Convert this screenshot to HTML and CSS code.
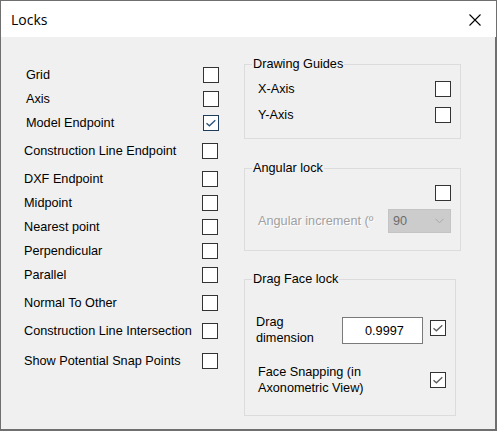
FILE: index.html
```html
<!DOCTYPE html>
<html lang="en">
<head>
<meta charset="utf-8">
<title>Locks</title>
<link rel="stylesheet" href="styles.css">
</head>
<body>
<div class="window">
  <header class="titlebar">
    <span class="title">Locks</span>
    <span class="close" aria-label="Close">
      <svg width="12" height="12" viewBox="0 0 12 12"><path d="M0.5 0.5L11.5 11.5M11.5 0.5L0.5 11.5" stroke="#000" stroke-width="1.1" fill="none"/></svg>
    </span>
  </header>

  <div class="content">
    <div class="snaps">
      <div class="row inset"><span class="lbl">Grid</span><span class="cb"></span></div>
      <div class="row inset"><span class="lbl">Axis</span><span class="cb"></span></div>
      <div class="row inset"><span class="lbl">Model Endpoint</span><span class="cb on blue"><svg viewBox="0 0 16 16"><path d="M3.5 8.2L6.4 10.8L12.3 5.2" /></svg></span></div>
      <div class="row wide"><span class="lbl">Construction Line Endpoint</span><span class="cb"></span></div>
      <div class="row wide"><span class="lbl">DXF Endpoint</span><span class="cb"></span></div>
      <div class="row"><span class="lbl">Midpoint</span><span class="cb"></span></div>
      <div class="row"><span class="lbl">Nearest point</span><span class="cb"></span></div>
      <div class="row"><span class="lbl">Perpendicular</span><span class="cb"></span></div>
      <div class="row"><span class="lbl">Parallel</span><span class="cb"></span></div>
      <div class="row wide"><span class="lbl">Normal To Other</span><span class="cb"></span></div>
      <div class="row wide"><span class="lbl">Construction Line Intersection</span><span class="cb"></span></div>
      <div class="row wider"><span class="lbl">Show Potential Snap Points</span><span class="cb"></span></div>
    </div>

    <div class="groups">
      <fieldset class="group guides">
        <legend>Drawing Guides</legend>
        <div class="gbody">
          <div class="grow"><span class="lbl">X-Axis</span><span class="cb"></span></div>
          <div class="grow"><span class="lbl">Y-Axis</span><span class="cb"></span></div>
        </div>
      </fieldset>

      <fieldset class="group angular">
        <legend>Angular lock</legend>
        <div class="gbody">
          <div class="grow end"><span class="cb"></span></div>
          <div class="grow">
            <span class="lbl disabled">Angular increment (º</span>
            <span class="combo"><span>90</span><svg width="9" height="6" viewBox="0 0 9 6"><path d="M0.5 0.8L4.5 4.8L8.5 0.8" stroke="#a8a8a8" stroke-width="1" fill="none"/></svg></span>
          </div>
        </div>
      </fieldset>

      <fieldset class="group drag">
        <legend>Drag Face lock</legend>
        <div class="gbody">
          <div class="grow dim">
            <span class="lbl dimlbl">Drag dimension</span>
            <span class="field">0.9997</span>
            <span class="cb on gray lift"><svg viewBox="0 0 16 16"><path d="M3.5 8.2L6.4 10.8L12.3 5.2" /></svg></span>
          </div>
          <div class="grow snap">
            <span class="lbl snaplbl">Face Snapping (in Axonometric View)</span>
            <span class="cb on gray"><svg viewBox="0 0 16 16"><path d="M3.5 8.2L6.4 10.8L12.3 5.2" /></svg></span>
          </div>
        </div>
      </fieldset>
    </div>
  </div>
</div>
</body>
</html>
```

FILE: styles.css
```css
* {
  box-sizing: border-box;
}

html,
body {
  margin: 0;
  background: #ffffff;
}

body {
  font-family: "Liberation Sans", Arial, sans-serif;
  font-size: 12.7px;
  color: #000000;
}

/* dialog frame */
.window {
  width: 497px;
  height: 431px;
  border: 1px solid #6f6f6f;
  display: flex;
  flex-direction: column;
  background: #f0f0f0;
}

.titlebar {
  height: 36px;
  flex: none;
  background: #ffffff;
  display: flex;
  align-items: center;
  justify-content: space-between;
  padding: 0 15px 0 10px;
}

.title {
  font-family: "Open Sans", "Noto Sans", sans-serif;
  font-size: 14px;
  color: #000000;
  line-height: 18px;
  margin-top: 1px;
}

.close {
  display: flex;
  width: 12px;
  height: 12px;
  margin-top: 1px;
}

.content {
  flex: 1;
  display: flex;
  align-items: flex-start;
  border-right: 1px solid #6f6f6f;
  border-bottom: 1px solid #6f6f6f;
}

/* left column: snap options */
.snaps {
  width: 219px;
  padding: 30px 1px 0 23px;
  display: flex;
  flex-direction: column;
  gap: 8px;
}

.row {
  height: 16px;
  display: flex;
  align-items: center;
  justify-content: space-between;
  padding-right: 1px;
}

.row.inset {
  padding-left: 2px;
  padding-right: 0;
}

.row.wide {
  margin-top: 4px;
}

.row.wider {
  margin-top: 6px;
}

.lbl {
  line-height: 16px;
  white-space: nowrap;
}

/* checkbox */
.cb {
  flex: none;
  width: 16px;
  height: 16px;
  border: 1px solid #333333;
  background: #ffffff;
  display: block;
  position: relative;
}

.cb svg {
  position: absolute;
  left: -1px;
  top: -1px;
  width: 16px;
  height: 16px;
  fill: none;
  stroke-width: 1.3;
}

.cb.blue {
  border-color: #1e3d5c;
}

.cb.blue svg {
  stroke: #2a5279;
}

.cb.gray svg {
  stroke: #5c5c5c;
}

/* right column: group boxes */
.groups {
  margin-left: 24px;
  padding-top: 20px;
  display: flex;
  flex-direction: column;
}

.group {
  margin: 0;
  padding: 0;
  width: 217px;
  border: 1px solid #dcdcdc;
  min-width: 0;
}

.group legend {
  margin-left: 7px;
  padding: 0 1px;
  line-height: 15px;
}

.group.angular {
  margin-top: 22px;
}

.group.drag {
  margin-top: 21px;
  width: 212px;
}

.gbody {
  padding: 9px 9px 15px 13px;
  display: flex;
  flex-direction: column;
  gap: 10px;
}

.grow {
  display: flex;
  align-items: center;
  justify-content: space-between;
  min-height: 16px;
}

.grow.end {
  justify-content: flex-end;
}

.angular .gbody {
  gap: 8px;
  padding-bottom: 17px;
}

.disabled {
  color: #a0a0a0;
  text-shadow: 1px 1px 0 #ffffff;
}

.combo {
  width: 63px;
  height: 24px;
  border: 1px solid #c4c4c4;
  background: #cccccc;
  color: #6d6d6d;
  display: flex;
  align-items: center;
  justify-content: space-between;
  padding: 0 6px 0 4px;
}

.combo svg {
  display: block;
}

/* drag face rows */
.drag .gbody {
  padding-top: 28px;
  padding-left: 11px;
  padding-bottom: 19px;
  gap: 18px;
}

.grow.dim {
  justify-content: flex-start;
}

.dimlbl {
  white-space: normal;
  width: 86px;
  line-height: 15.5px;
}

.field {
  width: 81px;
  height: 27px;
  border: 1px solid #7a7a7a;
  background: #ffffff;
  display: flex;
  align-items: center;
  padding-left: 22px;
  margin-right: 7px;
}

.lift {
  margin-bottom: 5px;
}

.grow.snap {
  padding-left: 2px;
}

.snaplbl {
  white-space: normal;
  width: 120px;
}
```
